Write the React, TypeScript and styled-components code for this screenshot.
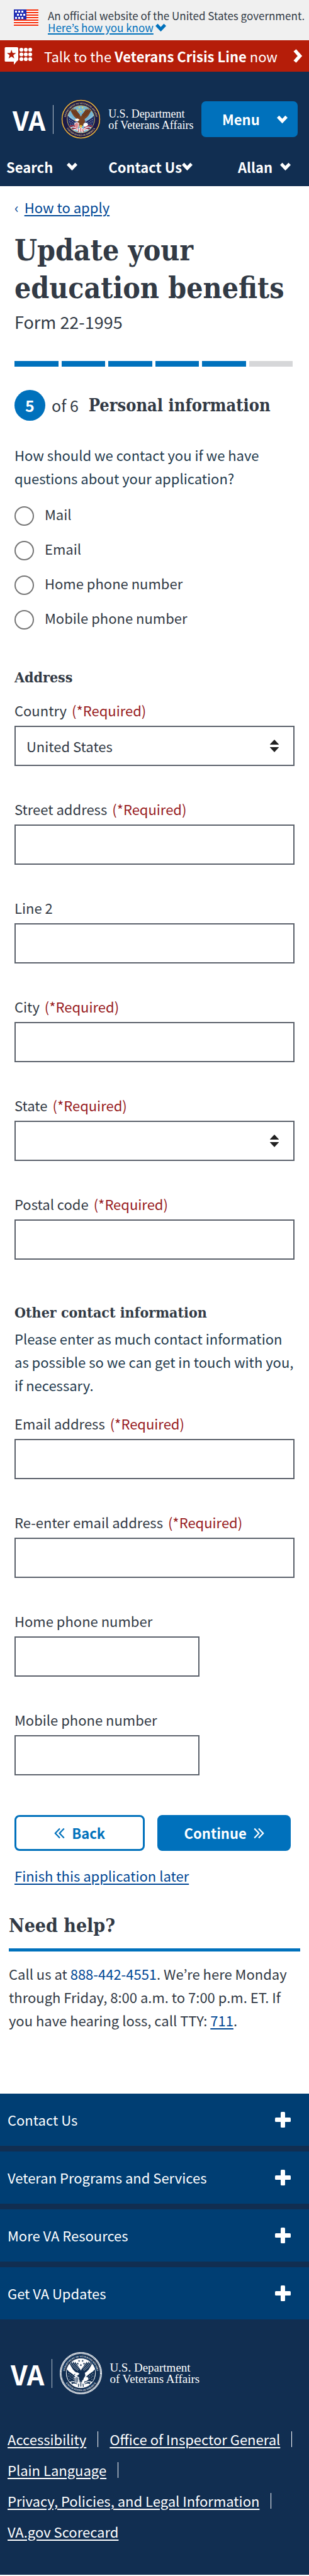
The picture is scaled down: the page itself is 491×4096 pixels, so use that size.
import React from "react";
import styled, { createGlobalStyle } from "styled-components";

const sans = `"Noto Sans CJK KR", "Noto Sans CJK JP", "Noto Sans", sans-serif`;
const slab = `"DejaVu Serif Condensed", "DejaVu Serif", serif`;
const serif = `"Liberation Serif", serif`;

const color = {
  ink: "#323a45",
  legend: "#243b4e",
  blue: "#0071bc",
  link: "#004795",
  navy: "#112e51",
  footer: "#003e73",
  red: "#b51d09",
  required: "#981b1e",
  border: "#5b616b",
};

const GlobalStyle = createGlobalStyle`
  *, *::before, *::after { box-sizing: border-box; }
  body { margin: 0; background: #fff; }
  button, input, select { font: inherit; color: inherit; }
`;

const Page = styled.div`
  font-family: ${sans};
  font-size: 22px;
  line-height: 37px;
  color: ${color.ink};
`;

/* Government banner */
const Banner = styled.div`
  display: flex;
  align-items: flex-start;
  gap: 15px;
  padding: 15px 0 11px 22px;
  background: #f0f0f0;
  svg { flex: none; }
`;
const BannerText = styled.div`
  font-size: 17px;
  line-height: 19px;
`;
const BannerToggle = styled.button`
  display: flex;
  align-items: center;
  gap: 3px;
  padding: 0;
  border: 0;
  background: none;
  color: ${color.blue};
  cursor: pointer;
  span { text-decoration: underline; text-decoration-thickness: 2px; text-underline-offset: 2px; }
`;

/* Crisis line */
const CrisisBar = styled.a`
  display: flex;
  align-items: center;
  height: 50px;
  padding: 0 10px 0 7px;
  background: ${color.red};
  color: #fff;
  text-decoration: none;
  line-height: 50px;
  svg { flex: none; }
  span { flex: 1; margin-left: 18px; white-space: nowrap; }
`;

/* Header */
const Header = styled.header`
  padding: 47px 0 8px;
  background: ${color.navy};
  color: #fff;
`;
const HeaderTop = styled.div`
  display: flex;
  align-items: center;
  justify-content: space-between;
  height: 57px;
  padding: 0 18px 0 20px;
`;
const LogoLink = styled.a`
  display: flex;
  align-items: center;
  gap: 12px;
  color: #fff;
  text-decoration: none;
`;
const LogoMark = styled.span<{ $size: number }>`
  font-size: ${(p) => p.$size}px;
  line-height: 46px;
  font-weight: 700;
`;
const LogoRule = styled.span`
  width: 1px;
  height: 46px;
  background: #b8c2ce;
`;
const LogoName = styled.span<{ $size: number }>`
  font-family: ${serif};
  font-size: ${(p) => p.$size}px;
  line-height: 18px;
  white-space: nowrap;
`;
const MenuButton = styled.button`
  display: flex;
  align-items: center;
  justify-content: space-between;
  width: 153px;
  height: 57px;
  padding: 0 16px 0 33px;
  border: 0;
  border-radius: 7px;
  background: ${color.blue};
  color: #fff;
  font-weight: 700;
  cursor: pointer;
`;
const HeaderNav = styled.nav`
  display: flex;
  height: 46px;
  margin-top: 24px;
  padding: 0 29px 0 10px;
`;
const NavButton = styled.button<{ $gap: number }>`
  display: flex;
  align-items: center;
  gap: ${(p) => p.$gap}px;
  padding: 0;
  border: 0;
  background: none;
  color: #fff;
  font-weight: 700;
  cursor: pointer;
  & + & { margin-left: 49px; }
  &:last-child { margin-left: auto; }
`;

/* Main form */
const Main = styled.main`
  padding: 15px 23px 0;
`;
const Crumb = styled.div`
  display: flex;
  gap: 9px;
  color: ${color.link};
`;
const TextLink = styled.a`
  color: ${color.link};
  text-decoration: underline;
  text-decoration-thickness: 2px;
  text-underline-offset: 3px;
`;
const PlainLink = styled(TextLink)`
  text-decoration: none;
`;
const Title = styled.h1`
  margin: 20px 0 0;
  font-family: ${slab};
  font-size: 46px;
  line-height: 60px;
  font-weight: 700;
`;
const Subtitle = styled.p`
  margin: 5px 0 0;
  font-size: 27px;
`;
const Progress = styled.ol`
  display: flex;
  gap: 5px;
  margin: 44px 3px 0 0;
  padding: 0;
  list-style: none;
`;
const Segment = styled.li<{ $done: boolean }>`
  flex: 1;
  height: 9px;
  background: ${(p) => (p.$done ? color.blue : "#d6d7d9")};
`;
const StepRow = styled.div`
  display: flex;
  align-items: center;
  height: 49px;
  margin-top: 37px;
  font-size: 25px;
  white-space: nowrap;
`;
const StepBadge = styled.span`
  width: 49px;
  height: 49px;
  margin-right: 10px;
  border-radius: 50%;
  background: ${color.blue};
  color: #fff;
  font-weight: 700;
  line-height: 49px;
  text-align: center;
`;
const StepName = styled.h2`
  margin: 0 0 0 16px;
  font-family: ${slab};
  font-size: 27px;
  line-height: 49px;
  font-weight: 700;
`;
const Fieldset = styled.fieldset`
  margin: 36px 0 0;
  padding: 0;
  border: 0;
`;
const Legend = styled.legend`
  padding: 0;
  color: ${color.legend};
`;
const Options = styled.div`
  display: flex;
  flex-direction: column;
  gap: 24px;
  margin-top: 26px;
`;
const Option = styled.label`
  display: flex;
  gap: 17px;
  height: 31px;
  line-height: 25px;
`;
const Radio = styled.input`
  appearance: none;
  flex: none;
  width: 31px;
  height: 31px;
  margin: 0;
  border: 2px solid #757575;
  border-radius: 50%;
  background: #fff;
  &:checked { background: ${color.blue}; box-shadow: inset 0 0 0 4px #fff; }
`;
const SectionTitle = styled.h3<{ $top: number }>`
  margin: ${(p) => p.$top}px 0 0;
  font-family: ${slab};
  font-size: 23px;
  line-height: 37px;
  font-weight: 700;
`;
const Intro = styled.p`
  margin: 5px 0 0;
  color: ${color.legend};
`;
const Fields = styled.div<{ $top: number }>`
  display: flex;
  flex-direction: column;
  gap: 53px;
  margin-top: ${(p) => p.$top}px;
`;
const Field = styled.div`
  display: flex;
  flex-direction: column;
  gap: 9px;
  label { line-height: 31px; }
`;
const Required = styled.span`
  margin-left: 8px;
  color: ${color.required};
`;
const TextInput = styled.input<{ $short?: boolean }>`
  width: ${(p) => (p.$short ? "66%" : "100%")};
  height: 64px;
  padding: 0 17px;
  border: 2px solid ${color.border};
  border-radius: 0;
  background: #fff;
`;
const SelectWrap = styled.div`
  position: relative;
  svg { position: absolute; top: 22px; right: 25px; pointer-events: none; }
`;
const Select = styled.select`
  display: block;
  appearance: none;
  width: 100%;
  height: 64px;
  padding: 0 48px 0 17px;
  border: 2px solid ${color.border};
  border-radius: 0;
  background: #fff;
`;
const Actions = styled.div`
  display: grid;
  grid-template-columns: 49fr 50fr;
  gap: 20px;
  margin: 63px 6px 21px 0;
`;
const ActionButton = styled.button<{ $outline?: boolean }>`
  display: flex;
  align-items: center;
  justify-content: center;
  gap: 11px;
  height: 57px;
  padding: 0;
  border: 3px solid ${color.blue};
  border-radius: 8px;
  background: ${(p) => (p.$outline ? "#fff" : color.blue)};
  color: ${(p) => (p.$outline ? color.blue : "#fff")};
  font-weight: 700;
  cursor: pointer;
`;

/* Help */
const Help = styled.section`
  margin: 41px 14px 98px;
  p { margin: 17px 0 0; }
`;
const HelpTitle = styled.h2`
  margin: 0;
  padding-bottom: 16px;
  border-bottom: 5px solid ${color.blue};
  font-family: ${slab};
  font-size: 30px;
  line-height: 40px;
  font-weight: 700;
`;

/* Footer */
const Footer = styled.footer`
  background: ${color.navy};
  color: #fff;
`;
const Accordion = styled.div`
  display: flex;
  flex-direction: column;
  gap: 9px;
`;
const AccordionButton = styled.button`
  display: flex;
  align-items: center;
  justify-content: space-between;
  height: 83px;
  padding: 0 29px 0 12px;
  border: 0;
  background: ${color.footer};
  color: #fff;
  cursor: pointer;
`;
const FooterLogo = styled.div`
  display: flex;
  padding: 52px 17px 47px;
`;
const FooterLinks = styled.ul`
  display: flex;
  flex-wrap: wrap;
  margin: 0;
  padding: 0 0 44px 12px;
  list-style: none;
  line-height: 49px;
`;
const FooterItem = styled.li`
  display: flex;
  align-items: center;
  a { color: #fff; text-decoration-thickness: 2px; text-underline-offset: 3px; }
  &:not(:last-child)::after {
    content: "";
    width: 1px;
    height: 25px;
    margin: 0 18px;
    background: #fff;
  }
`;

function Chevron({ stroke = 5 }: { stroke?: number }) {
  return (
    <svg width="17" height="14" viewBox="0 0 17 14" fill="none" stroke="currentColor" strokeWidth={stroke} aria-hidden="true">
      <path d="M1.8 2.6 8.5 9.6 15.2 2.6" />
    </svg>
  );
}

function Flag() {
  const stars = [
    [3, 3], [8, 3], [13, 3],
    [6, 8], [11, 8], [16, 8],
    [3, 13], [8, 13], [13, 13],
  ];
  return (
    <svg width="39" height="26" viewBox="0 0 39 26" shapeRendering="crispEdges" aria-hidden="true">
      <rect width="39" height="26" fill="#fff" />
      {[0, 4, 8, 12, 16, 20, 24].map((y) => (
        <rect key={y} y={y} width="39" height="2" fill="#f62f0c" />
      ))}
      <rect width="20" height="16" fill="#232fb5" />
      {stars.map(([x, y]) => (
        <rect key={`${x}-${y}`} x={x - 1} y={y - 1} width="3" height="3" fill="#fff" />
      ))}
    </svg>
  );
}

function CrisisIcon() {
  return (
    <svg width="45" height="28" viewBox="0 0 45 28" fill="#fff" aria-hidden="true">
      <path d="M2 0h18a2 2 0 0 1 2 2v18q0 1.500-2 2L15 28v-5H2a1.500 1.500 0 0 1-1.500-1.500V1.500A1.500 1.500 0 0 1 2 0z" />
      <path fill={color.red} d="M11.200 4l1.800 5.300h5.500l-4.400 3.400 1.600 5.400-4.500-3.200-4.500 3.200 1.600-5.400-4.400-3.400h5.500z" />
      {[4, 11.500, 19].map((y) =>
        [27, 34, 41].map((x) => <circle key={`${x}-${y}`} cx={x} cy={y} r="3.100" />)
      )}
    </svg>
  );
}

function Sorter() {
  return (
    <svg width="14" height="20" viewBox="0 0 14 20" fill="#212121" aria-hidden="true">
      <path d="M7 0l7 7.500V8H0v-.500zM7 20l7-7.500V12H0v.500z" />
    </svg>
  );
}

function DoubleAngle({ flip }: { flip?: boolean }) {
  return (
    <svg width="17" height="18" viewBox="0 0 17 18" fill="none" stroke="currentColor" strokeWidth="2.200" aria-hidden="true">
      <path d={flip ? "M9 1.500 1.800 9 9 16.500M15.800 1.500 8.600 9l7.200 7.500" : "M1.200 1.500 8.400 9l-7.200 7.500M8 1.500 15.200 9 8 16.500"} />
    </svg>
  );
}

function Plus() {
  return (
    <svg width="25" height="25" viewBox="0 0 25 25" fill="#fff" aria-hidden="true">
      <rect x="9" width="7" height="25" rx="1.500" />
      <rect y="9" width="25" height="7" rx="1.500" />
    </svg>
  );
}

const STAR = "M0-3.400.900-1 3.300-1 1.400.500 2.100 2.900 0 1.400-2.100 2.900-1.400.500-3.300-1-.900-1z";

/* Department seal: full colour in the header, one colour in the footer */
function Seal({ size, mono }: { size: number; mono?: boolean }) {
  const id = mono ? "m" : "c";
  const c = mono
    ? { band: color.navy, ring: "#fff", text: "#e4eaf0", field: "#fff", wing: color.navy, dark: "#fff", head: "#fff", flag: color.navy, red: color.navy, star: color.navy, talon: color.navy }
    : { band: "#1b1a48", ring: "#e3b73c", text: "#e6d28c", field: "#74b5d6", wing: "#7a4322", dark: "#3f1f10", head: "#fff", flag: "#1f2a63", red: "#c32a35", star: "#f3dc4e", talon: "#e9b92c" };
  return (
    <svg width={size} height={size} viewBox="0 0 120 120" aria-hidden="true">
      <defs>
        <path id={`top-${id}`} d="M14.600 68A46 46 0 1 1 105.400 68" />
        <path id={`bottom-${id}`} d="M10 72A51.500 51.500 0 0 0 110 72" />
      </defs>
      <circle cx="60" cy="60" r="60" fill={c.band} />
      <circle cx="60" cy="60" r="57" fill="none" stroke={c.ring} strokeWidth={mono ? 5 : 3} strokeDasharray={mono ? "2.500 1.200" : undefined} />
      {mono && <circle cx="60" cy="60" r="59.400" fill="none" stroke="#fff" strokeWidth="1.200" />}
      <circle cx="60" cy="60" r="41.500" fill={c.field} stroke={c.ring} strokeWidth="1.500" />
      <g fill={c.text} fontFamily="Liberation Serif, serif" fontWeight="700" fontSize="7">
        <text textAnchor="middle"><textPath href={`#top-${id}`} startOffset="50%">DEPARTMENT OF VETERANS AFFAIRS</textPath></text>
        <text textAnchor="middle"><textPath href={`#bottom-${id}`} startOffset="50%">UNITED STATES OF AMERICA</textPath></text>
      </g>
      {/* flags */}
      <path d="M20 49 Q30 62 53 68 L49 88 Q32 92 24 79 Q18 66 20 49z" fill={c.flag} />
      <path d="M100 49 Q90 62 67 68 L71 88 Q88 92 96 79 Q102 66 100 49z" fill={c.flag} />
      <g stroke={c.head} strokeWidth="2" strokeDasharray="1.500 4">
        <path d="M25 61l18 12M25 68l18 12M28 77l14 8M95 61L77 73M95 68L77 80M92 77l-14 8" />
      </g>
      <g stroke={c.red} strokeWidth="3" fill="none">
        <path d="M26 82Q38 76 50 88M34 90Q42 84 54 94M94 82Q82 76 70 88M86 90Q78 84 66 94" />
      </g>
      <g stroke="#fff" strokeWidth="2.200" fill="none">
        <path d="M29 86Q40 80 52 91M38 93Q46 89 56 97M91 86Q80 80 68 91M82 93Q74 89 64 97" />
      </g>
      <path d="M21 47 60 80M99 47 60 80" stroke={mono ? "#fff" : "#c7d4dd"} strokeWidth={mono ? 4 : 1.500} />
      {/* wings */}
      <path d="M56 62C48 60 40 54 36 47 33 42 29 36 27 29L33 34 31 26 38 33 37 26 43 33 43 27 49 36C53 41 56 46 59 50z" fill={c.wing} />
      <path d="M64 62C72 60 80 54 84 47 87 42 91 36 93 29L87 34 89 26 82 33 83 26 77 33 77 27 71 36C67 41 64 46 61 50z" fill={c.wing} />
      <g stroke={c.dark} strokeWidth="1" fill="none">
        <path d="M32 34Q40 46 52 53M37 33Q43 43 54 50M43 33Q48 41 57 47M88 34Q80 46 68 53M83 33Q77 43 66 50M77 33Q72 41 63 47" />
      </g>
      {/* body, head and shield */}
      <path d="M48 58Q54 50 64 52 74 58 72 68L66 80H56L50 68z" fill={c.wing} />
      <path d="M41 63Q44 57 51 58L56 62 50 67Q45 66 41 63z" fill={c.head} />
      <path d="M40 63l4-1-1 4z" fill={c.talon} />
      <path d="M40 72Q48 66 55 72L53 84Q47 90 42 84z" fill={c.head} />
      <path d="M43 73v12M47 71v16M51 72v13" stroke={c.red} strokeWidth="2" />
      <path d="M68 74Q78 66 82 76 76 86 68 82z" fill={c.head} />
      <path d="M56 80Q60 74 64 80L62 92H57z" fill={c.talon} />
      <path d="M50 92 60 84 70 92 66 101 60 96 54 101z" fill={c.head} />
      <path d="M54 90l-1 9M60 86v12M66 90l1 9" stroke={c.red} strokeWidth="2.400" />
      {/* five stars */}
      {[[55, 25], [65, 25], [51, 33], [69, 33], [60, 37]].map(([x, y]) => (
        <path key={`${x}-${y}`} d={STAR} transform={`translate(${x} ${y})`} fill={c.star} />
      ))}
    </svg>
  );
}

function FieldLabel({ id, text, required }: { id: string; text: string; required?: boolean }) {
  return (
    <label htmlFor={id}>
      {text}
      {required && <Required>(*Required)</Required>}
    </label>
  );
}

function TextField({ id, label, required, short, type = "text" }: { id: string; label: string; required?: boolean; short?: boolean; type?: string }) {
  return (
    <Field>
      <FieldLabel id={id} text={label} required={required} />
      <TextInput id={id} type={type} required={required} $short={short} />
    </Field>
  );
}

function SelectField({ id, label, options }: { id: string; label: string; options: string[] }) {
  return (
    <Field>
      <FieldLabel id={id} text={label} required />
      <SelectWrap>
        <Select id={id} required>
          {options.map((o) => <option key={o}>{o}</option>)}
        </Select>
        <Sorter />
      </SelectWrap>
    </Field>
  );
}

export default function App() {
  return (
    <Page>
      <GlobalStyle />
      <Banner>
        <Flag />
        <BannerText>
          An official website of the United States government.
          <BannerToggle type="button"><span>Here’s how you know</span><Chevron /></BannerToggle>
        </BannerText>
      </Banner>
      <CrisisBar href="#crisis-line">
        <CrisisIcon />
        <span>Talk to the <strong>Veterans Crisis Line</strong> now</span>
        <svg width="15" height="22" viewBox="0 0 15 22" fill="none" stroke="#fff" strokeWidth="5.500" aria-hidden="true">
          <path d="M2.500 2 10.500 11 2.500 20" />
        </svg>
      </CrisisBar>
      <Header>
        <HeaderTop>
          <LogoLink href="#home">
            <LogoMark $size={42}>VA</LogoMark>
            <LogoRule />
            <Seal size={63} />
            <LogoName $size={18}>U.S. Department<br />of Veterans Affairs</LogoName>
          </LogoLink>
          <MenuButton type="button">Menu<Chevron /></MenuButton>
        </HeaderTop>
        <HeaderNav aria-label="Site">
          <NavButton type="button" $gap={22}>Search<Chevron /></NavButton>
          <NavButton type="button" $gap={0}>Contact Us<Chevron /></NavButton>
          <NavButton type="button" $gap={12}>Allan<Chevron /></NavButton>
        </HeaderNav>
      </Header>
      <Main>
        <Crumb><span aria-hidden="true">‹</span><TextLink href="#how-to-apply">How to apply</TextLink></Crumb>
        <Title>Update your education benefits</Title>
        <Subtitle>Form 22-1995</Subtitle>
        <Progress aria-label="Step 5 of 6">
          {[1, 2, 3, 4, 5, 6].map((n) => <Segment key={n} $done={n <= 5} />)}
        </Progress>
        <StepRow>
          <StepBadge>5</StepBadge>of 6<StepName>Personal information</StepName>
        </StepRow>
        <form onSubmit={(e) => e.preventDefault()}>
          <Fieldset>
            <Legend>How should we contact you if we have questions about your application?</Legend>
            <Options>
              {["Mail", "Email", "Home phone number", "Mobile phone number"].map((o) => (
                <Option key={o}><Radio type="radio" name="contact" value={o} />{o}</Option>
              ))}
            </Options>
          </Fieldset>
          <SectionTitle $top={57}>Address</SectionTitle>
          <Fields $top={19}>
            <SelectField id="country" label="Country" options={["United States", "Canada", "Mexico"]} />
            <TextField id="street" label="Street address" required />
            <TextField id="line2" label="Line 2" />
            <TextField id="city" label="City" required />
            <SelectField id="state" label="State" options={["", "California", "New York", "Texas"]} />
            <TextField id="postal" label="Postal code" required />
          </Fields>
          <SectionTitle $top={65}>Other contact information</SectionTitle>
          <Intro>Please enter as much contact information as possible so we can get in touch with you, if necessary.</Intro>
          <Fields $top={27}>
            <TextField id="email" type="email" label="Email address" required />
            <TextField id="email2" type="email" label="Re-enter email address" required />
            <TextField id="home-phone" type="tel" label="Home phone number" short />
            <TextField id="mobile-phone" type="tel" label="Mobile phone number" short />
          </Fields>
          <Actions>
            <ActionButton type="button" $outline><DoubleAngle flip />Back</ActionButton>
            <ActionButton type="submit">Continue<DoubleAngle /></ActionButton>
          </Actions>
          <TextLink href="#finish-later">Finish this application later</TextLink>
        </form>
      </Main>
      <Help>
        <HelpTitle>Need help?</HelpTitle>
        <p>
          Call us at <PlainLink href="tel:888-442-4551">888-442-4551</PlainLink>. We’re here Monday through Friday, 8:00 a.m. to 7:00 p.m. ET. If you have hearing loss, call TTY: <TextLink href="tel:711">711</TextLink>.
        </p>
      </Help>
      <Footer>
        <Accordion>
          {["Contact Us", "Veteran Programs and Services", "More VA Resources", "Get VA Updates"].map((t) => (
            <AccordionButton key={t} type="button" aria-expanded="false">{t}<Plus /></AccordionButton>
          ))}
        </Accordion>
        <FooterLogo>
          <LogoLink href="#home">
            <LogoMark $size={43}>VA</LogoMark>
            <LogoRule />
            <Seal size={67} mono />
            <LogoName $size={19}>U.S. Department<br />of Veterans Affairs</LogoName>
          </LogoLink>
        </FooterLogo>
        <FooterLinks>
          {["Accessibility", "Office of Inspector General", "Plain Language", "Privacy, Policies, and Legal Information", "VA.gov Scorecard"].map((t) => (
            <FooterItem key={t}><a href="#footer">{t}</a></FooterItem>
          ))}
        </FooterLinks>
      </Footer>
    </Page>
  );
}
